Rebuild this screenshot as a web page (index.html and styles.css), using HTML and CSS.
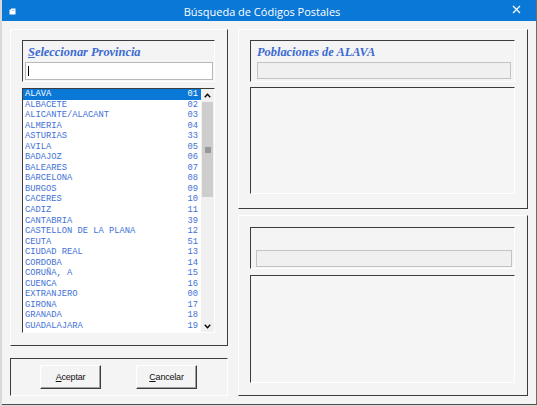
FILE: index.html
```html
<!DOCTYPE html>
<html>
<head>
<meta charset="utf-8">
<link rel="stylesheet" href="styles.css">
</head>
<body>
<div class="window">
  <div class="titlebar">
    <svg class="appicon" width="7" height="7" viewBox="0 0 7 7"><path d="M0.5 1.5 H2 V0.5 H6.5 V6.5 H0.5 Z" fill="#fff"/><rect x="2.5" y="2" width="3" height="0.8" fill="#9cc8ee"/></svg>
    <div class="title">Búsqueda de Códigos Postales</div>
    <svg class="close" width="9" height="9" viewBox="0 0 9 9"><path d="M1 1 L8 8 M8 1 L1 8" stroke="#fff" stroke-width="1.3"/></svg>
  </div>
  <div class="client">
    <div class="col left">
      <div class="group raised prov">
        <div class="box sunken head">
          <div class="caption"><u>S</u>eleccionar Provincia</div>
          <div class="textinput"><span class="caret"></span></div>
        </div>
        <div class="list sunken">
          <div class="rows">
            <div class="row sel"><span>ALAVA</span><span>01</span></div>
            <div class="row"><span>ALBACETE</span><span>02</span></div>
            <div class="row"><span>ALICANTE/ALACANT</span><span>03</span></div>
            <div class="row"><span>ALMERIA</span><span>04</span></div>
            <div class="row"><span>ASTURIAS</span><span>33</span></div>
            <div class="row"><span>AVILA</span><span>05</span></div>
            <div class="row"><span>BADAJOZ</span><span>06</span></div>
            <div class="row"><span>BALEARES</span><span>07</span></div>
            <div class="row"><span>BARCELONA</span><span>08</span></div>
            <div class="row"><span>BURGOS</span><span>09</span></div>
            <div class="row"><span>CACERES</span><span>10</span></div>
            <div class="row"><span>CADIZ</span><span>11</span></div>
            <div class="row"><span>CANTABRIA</span><span>39</span></div>
            <div class="row"><span>CASTELLON DE LA PLANA</span><span>12</span></div>
            <div class="row"><span>CEUTA</span><span>51</span></div>
            <div class="row"><span>CIUDAD REAL</span><span>13</span></div>
            <div class="row"><span>CORDOBA</span><span>14</span></div>
            <div class="row"><span>CORUÑA, A</span><span>15</span></div>
            <div class="row"><span>CUENCA</span><span>16</span></div>
            <div class="row"><span>EXTRANJERO</span><span>00</span></div>
            <div class="row"><span>GIRONA</span><span>17</span></div>
            <div class="row"><span>GRANADA</span><span>18</span></div>
            <div class="row"><span>GUADALAJARA</span><span>19</span></div>
          </div>
          <div class="scrollbar">
            <div class="arrow"><svg width="7" height="5" viewBox="0 0 7 5"><path d="M0.8 4.2 L3.5 1.3 L6.2 4.2" fill="none" stroke="#000" stroke-width="1.4"/></svg></div>
            <div class="track">
              <div class="thumb"><svg width="6" height="6" viewBox="0 0 6 6"><path d="M0 1 H6 M0 3 H6 M0 5 H6" stroke="#555" stroke-width="0.9"/></svg></div>
            </div>
            <div class="arrow"><svg width="7" height="5" viewBox="0 0 7 5"><path d="M0.8 0.8 L3.5 3.7 L6.2 0.8" fill="none" stroke="#000" stroke-width="1.4"/></svg></div>
          </div>
        </div>
      </div>
      <div class="group sunken buttons">
        <div class="btn"><u>A</u>ceptar</div>
        <div class="btn"><u>C</u>ancelar</div>
      </div>
    </div>
    <div class="col right">
      <div class="group raised pob">
        <div class="box sunken head">
          <div class="caption">Poblaciones de ALAVA</div>
          <div class="dinput"></div>
        </div>
        <div class="box sunken panel"></div>
      </div>
      <div class="group raised pob2">
        <div class="box sunken head2">
          <div class="dinput"></div>
        </div>
        <div class="box sunken panel"></div>
      </div>
    </div>
  </div>
</div>
</body>
</html>
```

FILE: styles.css
```css
* { box-sizing: border-box; }
html, body { margin: 0; padding: 0; }
body {
  width: 537px;
  height: 406px;
  background: #d9d9d9;
  overflow: hidden;
  font-family: "Liberation Sans", Arial, sans-serif;
}
.window {
  margin-left: 2px;
  width: 535px;
  height: 405px;
  background: #f4f4f4;
  border-right: 1px solid #6b6b6b;
  border-bottom: 1px solid #4c4c4c;
  display: flex;
  flex-direction: column;
}
.titlebar {
  height: 21px;
  background: #0a78d6;
  display: flex;
  align-items: center;
  flex: none;
}
.appicon { margin-left: 7px; margin-top: 2px; }
.title {
  flex: 1;
  text-align: center;
  color: #fff;
  font-family: "Open Sans", "Noto Sans", sans-serif;
  font-size: 11px;
  margin-left: -4px;
  margin-top: 2px;
}
.close { margin-right: 15px; margin-top: -2px; }
.client {
  flex: 1;
  display: flex;
  gap: 10px;
  padding: 8px 0 0 8px;
}
.col { display: flex; flex-direction: column; }
.col.left { width: 218px; gap: 12px; }
.col.right { width: 290px; gap: 6px; }

.raised {
  border: 1px solid;
  border-color: #ffffff #3c3c3c #3c3c3c #ffffff;
}
.sunken {
  border: 1px solid;
  border-color: #3c3c3c #ffffff #ffffff #3c3c3c;
}
.group { display: flex; flex-direction: column; }
.prov { height: 317px; padding: 10px 12px 0 11px; gap: 6px; }
.head { height: 42px; display: flex; flex-direction: column; }
.caption {
  height: 21px;
  padding-left: 5px;
  padding-top: 5px;
  font-family: "Liberation Serif", "Times New Roman", serif;
  font-weight: bold;
  font-style: italic;
  font-size: 12.4px;
  color: #3a6ad2;
  line-height: 13px;
}
.textinput {
  margin-left: 2px;
  width: 188px;
  height: 18px;
  background: #fff;
  border: 1px solid #b8b8b8;
  position: relative;
}
.caret {
  position: absolute;
  left: 2px;
  top: 3px;
  width: 1px;
  height: 10px;
  background: #000;
}
.list {
  height: 245px;
  display: flex;
  background: #fff;
}
.rows { flex: 1; }
.row {
  height: 10.55px;
  line-height: 10.55px;
  display: flex;
  justify-content: space-between;
  padding: 0 3px 0 2px;
  font-family: "Liberation Mono", "Courier New", monospace;
  font-size: 8.75px;
  color: #3f72d6;
  white-space: pre;
}
.row.sel { background: #0a78d7; color: #fff; }
.scrollbar {
  width: 13px;
  display: flex;
  flex-direction: column;
  background: #f0f0f0;
}
.arrow {
  height: 12px;
  display: flex;
  align-items: center;
  justify-content: center;
}
.track { flex: 1; padding: 1px 1px 0 1px; }
.thumb {
  height: 95px;
  background: #cdcdcd;
  display: flex;
  align-items: center;
  justify-content: center;
}

.buttons {
  height: 38px;
  flex-direction: row;
  padding: 6px 0 0 29px;
  gap: 35px;
}
.btn {
  width: 61px;
  height: 24px;
  border: 1px solid;
  border-color: #ffffff #3c3c3c #3c3c3c #ffffff;
  box-shadow: inset -1px -1px 0 #a0a0a0;
  display: flex;
  align-items: center;
  justify-content: center;
  font-size: 9px;
  color: #111;
  letter-spacing: -0.2px;
}

.pob { height: 180px; padding: 10px 12px 0 11px; gap: 5px; }
.pob .head .caption { padding-left: 6px; }
.dinput {
  margin-left: 6px;
  width: 254px;
  height: 17px;
  background: #f0f0f0;
  border: 1px solid #c3c3c3;
}
.pob .panel { height: 107px; width: 265px; }
.pob2 { height: 181px; padding: 11px 12px 0 11px; gap: 6px; }
.head2 { height: 42px; padding-top: 22px; }
.head2 .dinput { margin-left: 5px; width: 256px; }
.pob2 .panel { height: 108px; width: 265px; }
.panel { background: #f5f5f5; }
```
